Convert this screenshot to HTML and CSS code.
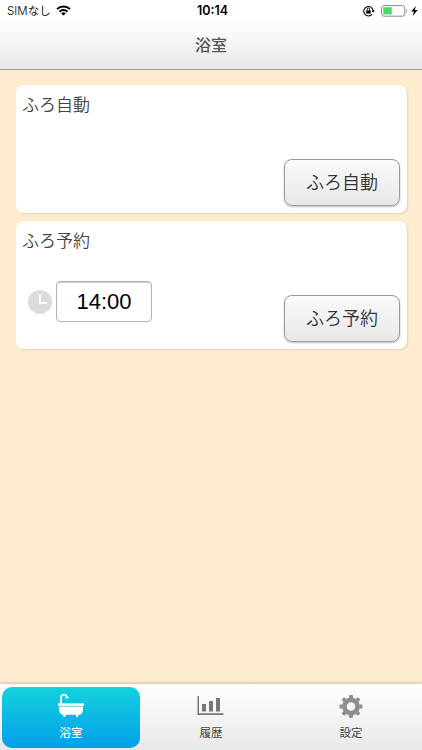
FILE: index.html
```html
<!DOCTYPE html>
<html lang="ja">
<head>
    <meta charset="UTF-8">
    <meta name="viewport" content="width=device-width, initial-scale=1.0">
    <title>浴室</title>
    <link rel="stylesheet" href="styles.css">
</head>
<body>
    <header class="header">
        <div class="status-bar">
            <div class="status-left">
                <span class="carrier">SIMなし</span>
                <svg class="wifi" width="15" height="11" viewBox="0 0 15 11" fill="none" stroke="#000" stroke-width="2">
                    <path d="M1 4.1a9.2 9.2 0 0 1 13 0"/>
                    <path d="M3.5 6.7a5.6 5.6 0 0 1 8 0"/>
                    <path d="M7.5 10.6L5.2 8.4a3.3 3.3 0 0 1 4.6 0z" fill="#000" stroke="none"/>
                </svg>
            </div>
            <span class="time">10:14</span>
            <div class="status-right">
                <svg class="lock" width="12" height="12" viewBox="0 0 12 12" fill="none" stroke="#000">
                    <path d="M9 9.4A4.7 4.7 0 1 1 10.2 6" stroke-width="1.1"/>
                    <path d="M8.5 5.4h3.4l-1.7 2.3z" fill="#000" stroke="none"/>
                    <path d="M4.3 5.5V4.2a1.2 1.2 0 0 1 2.4 0v1.3" stroke-width=".9"/>
                    <path d="M3.3 5.4h4.4v3.2H3.3z" fill="#000" stroke="none"/>
                </svg>
                <svg width="27" height="12" viewBox="0 0 27 12">
                    <rect x=".6" y=".6" width="23.2" height="10.6" rx="2.4" fill="#fff" stroke="#8c8c8c"/>
                    <rect x="2.2" y="2.2" width="8.6" height="7.4" rx=".6" fill="#4cd964"/>
                    <path d="M25 4v4c1.2-.5 1.2-3.5 0-4z" fill="#8c8c8c"/>
                </svg>
                <svg width="7" height="10" viewBox="0 0 7 10">
                    <path d="M4.8 0L.2 5.6h2.7L1.7 10l5-5.9H3.9z"/>
                </svg>
            </div>
        </div>
        <h1>浴室</h1>
    </header>

    <main class="content">
        <section class="card">
            <h2>ふろ自動</h2>
            <div class="card-row">
                <button class="action">ふろ自動</button>
            </div>
        </section>
        <section class="card">
            <h2>ふろ予約</h2>
            <div class="card-row">
                <div class="reserve">
                    <svg width="24" height="24" viewBox="0 0 24 24">
                        <circle cx="12" cy="12" r="12" fill="#dcdcdc"/>
                        <path d="M12 4.5V13h7" fill="none" stroke="#fff" stroke-width="2"/>
                    </svg>
                    <div class="time-field">14:00</div>
                </div>
                <button class="action">ふろ予約</button>
            </div>
        </section>
    </main>

    <nav class="tab-bar">
        <a class="tab active">
            <svg width="28" height="25" viewBox="0 0 28 25" fill="#fff">
                <path d="M4 11V4.8a3.2 3.2 0 0 1 6.2-1" fill="none" stroke="#fff" stroke-width="1.8"/>
                <path d="M8.2 3.8h3.4v1.5H8.2z"/>
                <rect x="1" y="10.4" width="26" height="2.4"/>
                <path d="M2 13.5h24v3c0 3.5-2 5.2-4.5 5.2l-.5 2.1h-2v-2H8.5v2h-2L6 21.7c-2.5-.5-4-2-4-5.2z"/>
            </svg>
            <span>浴室</span>
        </a>
        <a class="tab">
            <svg width="28" height="25" viewBox="0 0 28 25" fill="#777">
                <path d="M.5 3H2v17.2h24.5V22H.5z"/>
                <path d="M5 11h4v7.500H5zM12 8h4v10.500h-4zM19 5h4v13.500h-4z"/>
            </svg>
            <span>履歴</span>
        </a>
        <a class="tab">
            <svg width="28" height="25" viewBox="0 0 28 25">
                <g transform="translate(14 13.5)" fill="#8c8f91">
                    <circle r="6.6" fill="none" stroke="#8c8f91" stroke-width="4.6"/>
                    <path id="tooth" d="M-2.2-8.4L-1.7-11.5h3.4L2.2-8.4z"/>
                    <use href="#tooth" transform="rotate(45)"/>
                    <use href="#tooth" transform="rotate(90)"/>
                    <use href="#tooth" transform="rotate(135)"/>
                    <use href="#tooth" transform="rotate(180)"/>
                    <use href="#tooth" transform="rotate(225)"/>
                    <use href="#tooth" transform="rotate(270)"/>
                    <use href="#tooth" transform="rotate(315)"/>
                </g>
            </svg>
            <span>設定</span>
        </a>
    </nav>
</body>
</html>
```
FILE: styles.css
```css
* {
    box-sizing: border-box;
}

body {
    margin: 0;
    height: 100vh;
    display: flex;
    flex-direction: column;
    overflow: hidden;
    font-family: "Noto Sans CJK JP", sans-serif;
    color: #444;
    background: #fdecce;
}

svg {
    display: block;
    flex: none;
}

.header {
    height: 70px;
    flex: none;
    background: linear-gradient(#fff 20px, #e8e8e8);
    border-bottom: 1px solid #999;
}

.status-bar {
    height: 22px;
    padding: 0 4px 0 7px;
    display: grid;
    grid-template-columns: 1fr auto 1fr;
    align-items: center;
    color: #000;
}

.status-left,
.status-right {
    display: flex;
    align-items: center;
}

.status-left {
    gap: 5px;
}

.wifi,
.lock {
    margin-top: -1px;
}

.status-right {
    justify-content: flex-end;
    gap: 6px;
}

.status-right svg:last-child {
    margin-left: -3px;
}

.carrier {
    font: 350 11.5px/22px Inter, "Noto Sans CJK JP", sans-serif;
}

.time {
    font: 600 12.5px/22px Inter, sans-serif;
}

h1 {
    margin: 0;
    font-size: 16px;
    font-weight: 500;
    line-height: 44px;
    text-align: center;
    color: #555;
}

.content {
    flex: 1;
    padding: 15px 15px 0 16px;
    display: flex;
    flex-direction: column;
    gap: 8px;
}

.card {
    height: 128px;
    padding: 6px 7px 7px 6px;
    display: flex;
    flex-direction: column;
    justify-content: space-between;
    background: #fff;
    border-radius: 8px;
    box-shadow: 1px 1px 2px rgba(0, 0, 0, 0.12);
}

h2 {
    margin: 0;
    font-size: 17px;
    font-weight: 350;
    line-height: 26px;
}

.card-row {
    display: flex;
    align-items: flex-end;
}

.reserve {
    display: flex;
    align-items: center;
    gap: 4px;
    margin: 0 0 20px 6px;
}

.time-field {
    width: 96px;
    height: 41px;
    border: 1px solid #b5b5b5;
    border-radius: 4px;
    box-shadow: inset 0 1px 1px #ccc;
    font: 22px/40px "Liberation Sans", sans-serif;
    text-align: center;
    color: #000;
}

.action {
    width: 116px;
    height: 47px;
    margin-left: auto;
    padding: 0 0 3px;
    border: 1px solid #999;
    border-radius: 8px;
    background: linear-gradient(#fafafa, #e8e8e8);
    box-shadow: 0 1px 2px rgba(0, 0, 0, 0.25);
    font: 350 18px "Noto Sans CJK JP", sans-serif;
    color: #333;
}

.tab-bar {
    height: 66px;
    flex: none;
    padding: 3px 2px 2px;
    display: grid;
    grid-template-columns: repeat(3, 138px);
    gap: 2px;
    background: linear-gradient(#fff, #e8e8e8);
    box-shadow: 0 -1px 3px rgba(0, 0, 0, 0.2);
}

.tab {
    display: flex;
    flex-direction: column;
    align-items: center;
    padding-top: 6px;
    border-radius: 10px;
    font-size: 11.5px;
    line-height: 17px;
    color: #444;
}

.tab span {
    margin-top: 6px;
}

.tab.active {
    background: linear-gradient(#14d2dc, #039fe9);
    color: #fff;
    font-weight: 500;
}
```
